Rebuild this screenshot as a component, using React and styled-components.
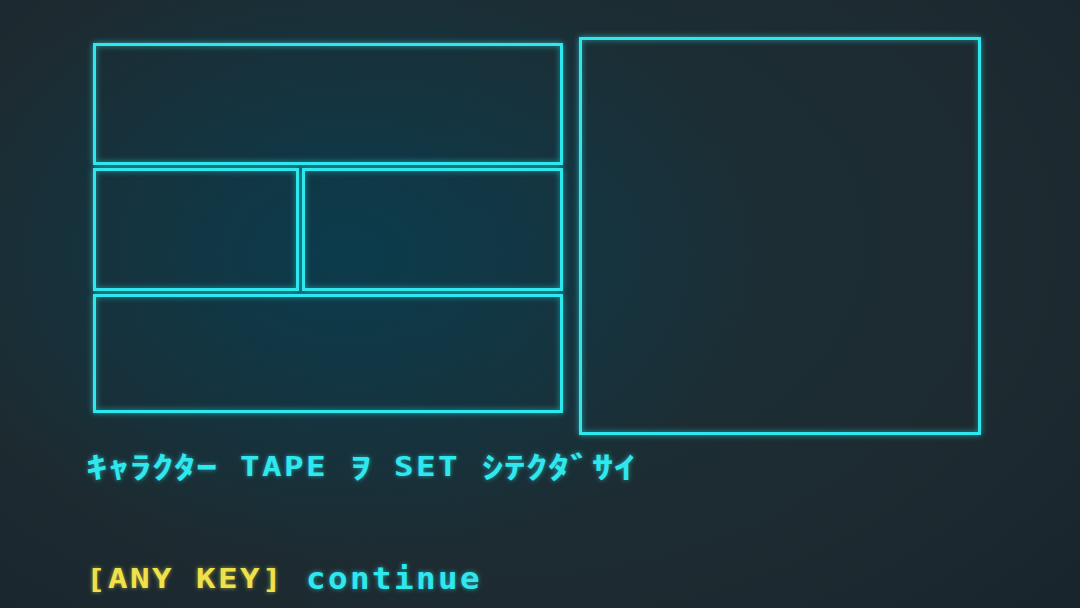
import React from "react";
import styled, { createGlobalStyle } from "styled-components";

const GlobalStyle = createGlobalStyle`
  html, body {
    margin: 0;
    padding: 0;
    background: #1d2a30;
  }
  #root {
    width: 1080px;
    height: 608px;
    overflow: hidden;
  }
`;

const CYAN = "#2fe8ee";
const YELLOW = "#f0e14a";

const Screen = styled.div`
  width: 1080px;
  height: 608px;
  box-sizing: border-box;
  padding: 37px 0 0 85px;
  display: flex;
  flex-direction: column;
  background:
    radial-gradient(ellipse 420px 300px at 32% 42%, rgba(8, 62, 80, 0.85) 0%, rgba(8, 62, 80, 0) 100%),
    radial-gradient(ellipse 900px 600px at 45% 40%, #1c3038 0%, #1d2b31 60%, #17222a 100%);
`;

const Frames = styled.div`
  display: flex;
  align-items: flex-start;
  gap: 16px;
  margin-left: 8px;
`;

const LeftGroup = styled.div`
  width: 470px;
  margin-top: 6px;
  display: flex;
  flex-direction: column;
  gap: 3px;
`;

const SplitRow = styled.div`
  display: flex;
  gap: 3px;
`;

const Panel = styled.div`
  box-sizing: border-box;
  width: ${(p) => p.$w || "100%"};
  height: ${(p) => p.$h}px;
  border: 3px solid ${CYAN};
  box-shadow:
    0 0 6px rgba(47, 232, 238, 0.6),
    inset 0 0 6px rgba(47, 232, 238, 0.5);
`;

const BigPanel = styled(Panel)`
  width: 402px;
  height: 398px;
`;

const TextLine = styled.div`
  display: flex;
  height: 26px;
  margin-top: ${(p) => p.$mt}px;
`;

const Cell = styled.span`
  display: inline-flex;
  width: 22px;
  height: 26px;
  align-items: center;
  justify-content: center;
  overflow: visible;
`;

const Glyph = styled.span`
  display: inline-block;
  color: ${(p) => p.$color};
  font-family: ${(p) =>
    p.$kana
      ? `"Noto Sans CJK JP", "DejaVu Sans Mono", monospace`
      : `"DejaVu Sans Mono", "Liberation Mono", monospace`};
  font-weight: bold;
  font-size: ${(p) => (p.$kana ? 30 : 26)}px;
  line-height: 26px;
  transform: ${(p) =>
    p.$kana
      ? "translateY(-2px) scaleX(1.45)"
      : p.$lower
      ? "scale(1.25, 1.18)"
      : "scaleX(1.25)"};
  transform-origin: center 70%;
  text-shadow: 0 0 4px ${(p) => p.$color}99;
  white-space: pre;
`;

const isKana = (ch) => /[\uFF61-\uFF9F]/.test(ch);
const isLower = (ch) => /[a-z]/.test(ch);

function CharLine({ parts, mt }) {
  return (
    <TextLine $mt={mt}>
      {parts.map(([text, color], pi) =>
        Array.from(text).map((ch, i) => (
          <Cell key={`${pi}-${i}`}>
            <Glyph $color={color} $kana={isKana(ch)} $lower={isLower(ch)}>
              {ch}
            </Glyph>
          </Cell>
        ))
      )}
    </TextLine>
  );
}

export default function App() {
  return (
    <>
      <GlobalStyle />
      <Screen>
        <Frames>
          <LeftGroup>
            <Panel $h={122} />
            <SplitRow>
              <Panel $w="206px" $h={123} />
              <Panel $w="261px" $h={123} />
            </SplitRow>
            <Panel $h={119} />
          </LeftGroup>
          <BigPanel />
        </Frames>
        <CharLine mt={19} parts={[["ｷｬﾗｸﾀｰ TAPE ｦ SET ｼﾃｸﾀﾞｻｲ", CYAN]]} />
        <CharLine
          mt={86}
          parts={[
            ["[ANY KEY]", YELLOW],
            [" continue", CYAN],
          ]}
        />
      </Screen>
    </>
  );
}
